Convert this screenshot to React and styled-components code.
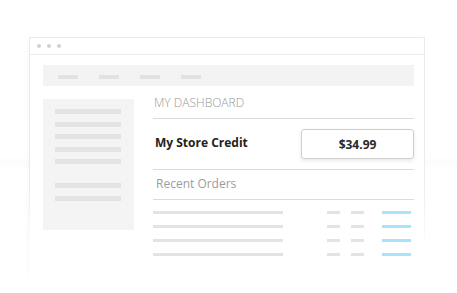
import React from "react";
import styled, { createGlobalStyle } from "styled-components";

const GlobalStyle = createGlobalStyle`
  html, body {
    margin: 0;
    padding: 0;
    background: #fff;
  }
  body {
    font-family: "Open Sans", "Liberation Sans", sans-serif;
    width: 457px;
    height: 293px;
    overflow: hidden;
  }
`;

const navItems = [0, 1, 2, 3];
const sideGroups = [5, 2];
const orders = [0, 1, 2, 3];

export default function App() {
  return (
    <>
      <GlobalStyle />
      <Page>
        <Window>
          <TitleBar>
            <Dot />
            <Dot />
            <Dot />
          </TitleBar>
          <Body>
            <Nav>
              {navItems.map(i => (
                <NavItem key={i} />
              ))}
            </Nav>
            <Content>
              <Sidebar>
                {sideGroups.map((count, g) => (
                  <SideGroup key={g}>
                    {[...Array(count)].map((_, i) => (
                      <SideLine key={i} />
                    ))}
                  </SideGroup>
                ))}
              </Sidebar>
              <Main>
                <Heading>MY DASHBOARD</Heading>
                <CreditRow>
                  <CreditLabel>My Store Credit</CreditLabel>
                  <CreditBox>$34.99</CreditBox>
                </CreditRow>
                <Subheading>Recent Orders</Subheading>
                <Orders>
                  {orders.map(i => (
                    <OrderRow key={i}>
                      <Bar $w={130} />
                      <Bar $w={13} $ml="auto" />
                      <Bar $w={13} $ml="11px" />
                      <Bar $w={29} $ml="18px" $color="#a9e2fb" />
                    </OrderRow>
                  ))}
                </Orders>
              </Main>
            </Content>
          </Body>
        </Window>
      </Page>
    </>
  );
}

const Page = styled.div`
  width: 457px;
  height: 293px;
  padding: 37px 0 0 29px;
  box-sizing: border-box;
  background:
    linear-gradient(to bottom, transparent 158px, rgba(0, 0, 0, 0.012) 160px, rgba(0, 0, 0, 0.012) 166px, transparent 168px);
`;

const Window = styled.div`
  width: 396px;
  height: 240px;
  box-sizing: border-box;
  background: #fff;
  border: 1px solid transparent;
  border-bottom: none;
  border-image: linear-gradient(to bottom, #ebebeb 0%, #ececec 62%, rgba(236, 236, 236, 0) 88%) 1;
  box-shadow: -3px 0 5px -3px rgba(0, 0, 0, 0.05);
`;

const TitleBar = styled.div`
  display: flex;
  align-items: center;
  gap: 6px;
  height: 16px;
  padding-left: 7px;
  border-bottom: 1px solid #ebebeb;
`;

const Dot = styled.span`
  width: 4px;
  height: 4px;
  border-radius: 50%;
  background: #d2d2d2;
`;

const Body = styled.div`
  padding: 10px 10px 0 13px;
`;

const Nav = styled.div`
  display: flex;
  gap: 21px;
  width: 371px;
  height: 21px;
  box-sizing: border-box;
  padding: 10px 0 0 15px;
  background: #f3f3f3;
`;

const NavItem = styled.span`
  width: 20px;
  height: 4px;
  background: #e2e2e2;
`;

const Content = styled.div`
  display: flex;
  align-items: flex-start;
  margin-top: 9px;
`;

const Sidebar = styled.div`
  display: flex;
  flex-direction: column;
  gap: 19px;
  width: 91px;
  height: 131px;
  box-sizing: border-box;
  margin-top: 4px;
  padding: 10px 0 0 12px;
  background: #f4f4f4;
`;

const SideGroup = styled.div`
  display: flex;
  flex-direction: column;
  gap: 7.5px;
`;

const SideLine = styled.span`
  width: 66px;
  height: 5px;
  background: #e3e3e3;
`;

const Main = styled.div`
  width: 261px;
  margin-left: 19px;
`;

const Heading = styled.div`
  padding: 0 0 7px 1px;
  font-size: 12px;
  line-height: 16px;
  font-weight: 300;
  color: #999;
  border-bottom: 1px solid #dcdcdc;
`;

const CreditRow = styled.div`
  display: flex;
  align-items: center;
  justify-content: space-between;
  padding: 10px 0 10px;
  border-bottom: 1px solid #dcdcdc;
`;

const CreditLabel = styled.div`
  padding-left: 2px;
  margin-top: -2px;
  font-size: 12px;
  line-height: 16px;
  font-weight: 700;
  color: #222;
`;

const CreditBox = styled.div`
  display: flex;
  align-items: center;
  justify-content: center;
  width: 113px;
  height: 30px;
  box-sizing: border-box;
  border: 1px solid #cfcfcf;
  border-radius: 3px;
  box-shadow: 0 2px 4px rgba(0, 0, 0, 0.09);
  font-size: 12px;
  font-weight: 700;
  color: #2a2a2a;
`;

const Subheading = styled.div`
  padding: 6px 0 7px 3px;
  font-size: 12px;
  line-height: 16px;
  color: #9c9c9c;
  border-bottom: 1px solid #dcdcdc;
`;

const Orders = styled.div`
  display: flex;
  flex-direction: column;
  gap: 11px;
  padding: 11px 3px 0 0;
`;

const OrderRow = styled.div`
  display: flex;
  height: 3px;
`;

const Bar = styled.span`
  width: ${p => p.$w}px;
  height: 3px;
  margin-left: ${p => p.$ml || 0};
  background: ${p => p.$color || "#e3e3e3"};
`;
